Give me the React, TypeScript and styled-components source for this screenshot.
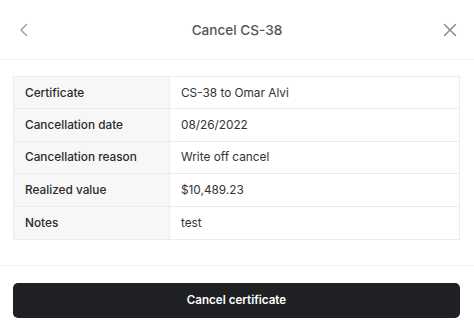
import React from 'react';
import styled, { createGlobalStyle } from 'styled-components';

const GlobalStyle = createGlobalStyle`
  html, body {
    margin: 0;
    padding: 0;
    background: #ffffff;
  }
  * {
    box-sizing: border-box;
  }
`;

const rows = [
  { label: 'Certificate', value: 'CS-38 to Omar Alvi' },
  { label: 'Cancellation date', value: '08/26/2022' },
  { label: 'Cancellation reason', value: 'Write off cancel' },
  { label: 'Realized value', value: '$10,489.23' },
  { label: 'Notes', value: 'test' },
];

export default function App() {
  return (
    <>
      <GlobalStyle />
      <Modal>
        <Header>
          <IconButton aria-label="Back">
            <svg width="16" height="16" viewBox="0 0 16 16" fill="none">
              <path
                d="M10.5 2.5L5 8l5.5 5.5"
                stroke="#9a9a9a"
                strokeWidth="1.4"
                strokeLinecap="round"
                strokeLinejoin="round"
              />
            </svg>
          </IconButton>
          <Title>Cancel CS-38</Title>
          <IconButton aria-label="Close">
            <svg width="16" height="16" viewBox="0 0 16 16" fill="none">
              <path
                d="M2.5 2.5l11 11M13.5 2.5l-11 11"
                stroke="#8a8a8a"
                strokeWidth="1.5"
                strokeLinecap="round"
              />
            </svg>
          </IconButton>
        </Header>

        <Body>
          <DetailTable>
            {rows.map((row, i) => (
              <Row key={row.label} last={i === rows.length - 1}>
                <Label>{row.label}</Label>
                <Value>{row.value}</Value>
              </Row>
            ))}
          </DetailTable>
        </Body>

        <Footer>
          <PrimaryButton>Cancel certificate</PrimaryButton>
        </Footer>
      </Modal>
    </>
  );
}

const Modal = styled.div`
  width: 474px;
  height: 333px;
  display: flex;
  flex-direction: column;
  font-family: Inter, 'Liberation Sans', sans-serif;
  color: #2b2b2b;
`;

const Header = styled.div`
  height: 60px;
  display: flex;
  align-items: center;
  justify-content: space-between;
  padding: 0 16px;
  border-bottom: 1px solid #f0f0f0;
`;

const IconButton = styled.button`
  width: 16px;
  height: 16px;
  padding: 0;
  border: none;
  background: none;
  display: flex;
  align-items: center;
  justify-content: center;
  cursor: pointer;
`;

const Title = styled.div`
  font-size: 13.6px;
  font-weight: 500;
  color: #555555;
`;

const Body = styled.div`
  padding: 16px 13px 25px 13px;
  border-bottom: 1px solid #f0f0f0;
`;

const DetailTable = styled.div`
  width: 447px;
  border: 1px solid #ececec;
`;

const Row = styled.div<{ last: boolean }>`
  display: grid;
  grid-template-columns: 155px 1fr;
  height: 32.4px;
  border-bottom: ${props => (props.last ? 'none' : '1px solid #ececec')};
`;

const Label = styled.div`
  display: flex;
  align-items: center;
  padding-left: 11px;
  background: #f7f7f7;
  font-size: 11.8px;
  font-weight: 500;
  color: #2a2a2a;
`;

const Value = styled.div`
  display: flex;
  align-items: center;
  padding-left: 11px;
  border-left: 1px solid #ececec;
  font-size: 11.8px;
  color: #333333;
`;

const Footer = styled.div`
  padding: 17px 13px 0 13px;
`;

const PrimaryButton = styled.button`
  width: 447px;
  height: 35px;
  border: none;
  border-radius: 5px;
  background: #1f2024;
  color: #ffffff;
  font-family: Inter, 'Liberation Sans', sans-serif;
  font-size: 11.6px;
  font-weight: 600;
  cursor: pointer;
`;
